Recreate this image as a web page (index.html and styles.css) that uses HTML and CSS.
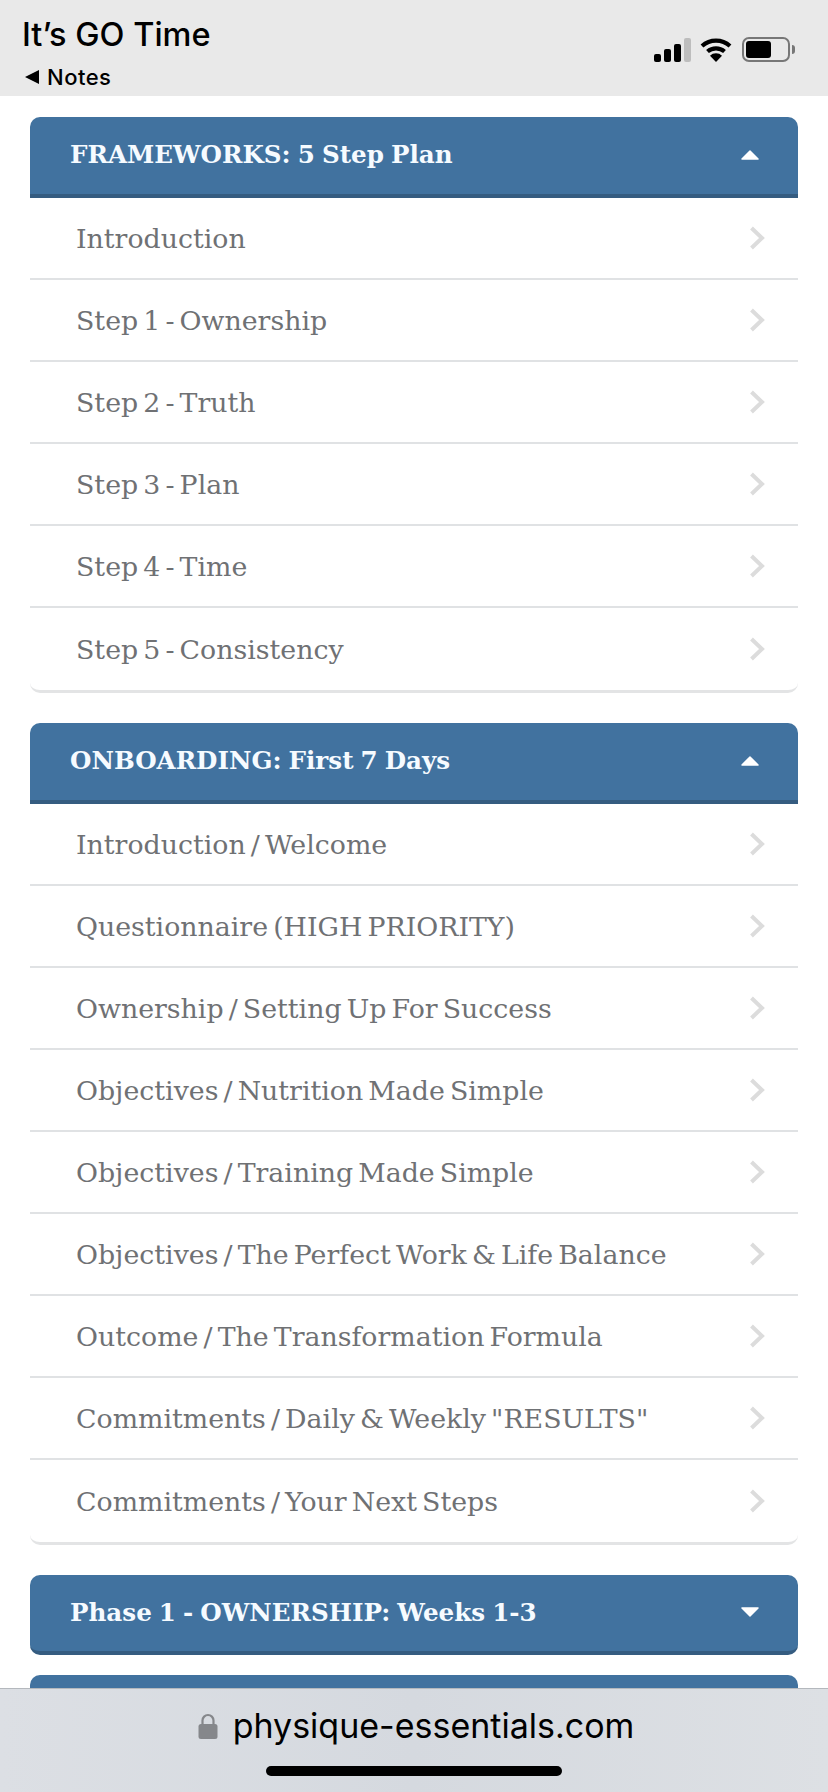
FILE: index.html

```html
<!DOCTYPE html>
<html lang="en">
<head>
<meta charset="UTF-8">
<meta name="viewport" content="width=device-width, initial-scale=1.0">
<title>It's GO Time</title>
<link rel="stylesheet" href="styles.css">
</head>
<body>
<svg class="defs" width="0" height="0">
<symbol id="chev" viewBox="0 0 16 24"><path d="M2.5 2 L13 12 L2.5 22" fill="none" stroke="currentColor" stroke-width="4"/></symbol>
<symbol id="caret" viewBox="0 0 18 10"><path d="M9 1 L17 9 L1 9 Z" fill="currentColor" stroke="currentColor" stroke-width="1.5" stroke-linejoin="round"/></symbol>
</svg>
<div class="statusbar">
<div class="status-left">
<div class="app-title">It’s GO Time</div>
<div class="back"><span class="back-arrow"></span>Notes</div>
</div>
<div class="status-right">
<div class="signal">
<span class="bar b1"></span><span class="bar b2"></span><span class="bar b3"></span><span class="bar b4"></span>
</div>
<svg class="wifi" width="32" height="25" viewBox="0 0 32 25">
<path d="M2 9 A21 21 0 0 1 30 9" fill="none" stroke="#000" stroke-width="4.2"/>
<path d="M7.5 14.5 A13 13 0 0 1 24.5 14.5" fill="none" stroke="#000" stroke-width="4.2"/>
<path d="M16 25 L10 18.8 A8.5 8.5 0 0 1 22 18.8 Z" fill="#000"/>
</svg>
<div class="battery"><div class="battery-fill"></div></div>
<div class="battery-nub"></div>
</div>
</div>

<div class="content">
<div class="panel">
<div class="panel-head open">
<span>FRAMEWORKS: 5 Step Plan</span>
<svg class="caret"><use href="#caret"/></svg>
</div>
<ul class="lessons">
<li>Introduction<svg class="chev"><use href="#chev"/></svg></li>
<li>Step 1 - Ownership<svg class="chev"><use href="#chev"/></svg></li>
<li>Step 2 - Truth<svg class="chev"><use href="#chev"/></svg></li>
<li>Step 3 - Plan<svg class="chev"><use href="#chev"/></svg></li>
<li>Step 4 - Time<svg class="chev"><use href="#chev"/></svg></li>
<li>Step 5 - Consistency<svg class="chev"><use href="#chev"/></svg></li>
</ul>
</div>

<div class="panel">
<div class="panel-head open">
<span>ONBOARDING: First 7 Days</span>
<svg class="caret"><use href="#caret"/></svg>
</div>
<ul class="lessons">
<li>Introduction / Welcome<svg class="chev"><use href="#chev"/></svg></li>
<li>Questionnaire (HIGH PRIORITY)<svg class="chev"><use href="#chev"/></svg></li>
<li>Ownership / Setting Up For Success<svg class="chev"><use href="#chev"/></svg></li>
<li>Objectives / Nutrition Made Simple<svg class="chev"><use href="#chev"/></svg></li>
<li>Objectives / Training Made Simple<svg class="chev"><use href="#chev"/></svg></li>
<li>Objectives / The Perfect Work &amp; Life Balance<svg class="chev"><use href="#chev"/></svg></li>
<li>Outcome / The Transformation Formula<svg class="chev"><use href="#chev"/></svg></li>
<li>Commitments / Daily &amp; Weekly "RESULTS"<svg class="chev"><use href="#chev"/></svg></li>
<li>Commitments / Your Next Steps<svg class="chev"><use href="#chev"/></svg></li>
</ul>
</div>

<div class="panel closed">
<div class="panel-head">
<span>Phase 1 - OWNERSHIP: Weeks 1-3</span>
<svg class="caret down"><use href="#caret"/></svg>
</div>
</div>

<div class="panel closed">
<div class="panel-head"></div>
</div>
</div>

<div class="urlbar">
<div class="url">
<svg class="lock" width="20" height="26" viewBox="0 0 20 26">
<path d="M4.5 12 V7.5 A5.5 5.5 0 0 1 15.5 7.5 V12" fill="none" stroke="#85878b" stroke-width="2.2"/>
<rect x="0.5" y="11" width="19" height="15" rx="2.5" fill="#85878b"/>
</svg>
<span>physique-essentials.com</span>
</div>
<div class="homebar"></div>
</div>
</body>
</html>
```

FILE: styles.css

```css
* {
    box-sizing: border-box;
}
html, body {
    margin: 0;
    padding: 0;
}
body {
    width: 828px;
    height: 1792px;
    overflow: hidden;
    display: flex;
    flex-direction: column;
    background-color: #fff;
    font-family: Inter, 'Liberation Sans', sans-serif;
}
.defs {
    position: absolute;
}

/* status bar */
.statusbar {
    height: 96px;
    flex: none;
    background-color: #e9e9e9;
    display: flex;
    justify-content: space-between;
    padding: 0 33px 0 22px;
    color: #000;
}
.app-title {
    font-size: 32.5px;
    font-weight: 500;
    line-height: 36px;
    margin-top: 17px;
}
.back {
    display: flex;
    align-items: center;
    font-size: 22px;
    font-weight: 500;
    line-height: 26px;
    margin-top: 11px;
    margin-left: 3px;
    letter-spacing: 0.5px;
}
.back-arrow {
    width: 0;
    height: 0;
    border-top: 7px solid transparent;
    border-bottom: 7px solid transparent;
    border-right: 14px solid #000;
    margin-right: 8px;
}
.status-right {
    display: flex;
    align-items: flex-start;
    padding-top: 37px;
}
.signal {
    display: flex;
    align-items: flex-end;
    gap: 3px;
    height: 25px;
    margin-right: 9px;
}
.bar {
    width: 7px;
    background-color: #000;
    border-radius: 2px;
}
.b1 { height: 8px; }
.b2 { height: 13px; }
.b3 { height: 18px; }
.b4 { height: 24px; background-color: #bdbdbd; }
.wifi {
    margin-right: 10px;
}
.battery {
    width: 48px;
    height: 25px;
    border: 2px solid #777;
    border-radius: 7px;
    padding: 2px;
}
.battery-fill {
    width: 25px;
    height: 100%;
    background-color: #000;
    border-radius: 3px;
}
.battery-nub {
    width: 3px;
    height: 9px;
    margin: 8px 0 0 2px;
    background-color: #777;
    border-radius: 0 3px 3px 0;
}

/* accordion */
.content {
    flex: 1;
    min-height: 0;
    overflow: hidden;
    padding: 21px 30px 0;
}
.panel {
    margin-bottom: 30px;
    border-bottom: 3px solid #e3e4e5;
    border-radius: 0 0 10px 10px;
}
.panel.closed {
    margin-bottom: 20px;
    border-bottom: none;
}
.panel-head {
    height: 80px;
    background-color: #41729f;
    border-bottom: 4px solid #355c80;
    border-radius: 10px;
    color: #f6fbff;
    font-family: 'DejaVu Serif', serif;
    font-size: 24.6px;
    font-weight: bold;
    word-spacing: -1.5px;
    display: flex;
    align-items: center;
    justify-content: space-between;
    padding: 0 39px 2px 40px;
}
.panel-head.open {
    height: 81px;
    border-radius: 10px 10px 0 0;
}
.caret {
    width: 18px;
    height: 10px;
    color: #fff;
}
.caret.down {
    transform: rotate(180deg);
}
.lessons {
    list-style: none;
    margin: 0;
    padding: 0;
}
.lessons li {
    height: 82px;
    display: flex;
    align-items: center;
    justify-content: space-between;
    padding: 0 33px 0 46px;
    border-bottom: 2px solid #e0e2e4;
    color: #6f7174;
    font-family: 'DejaVu Serif', serif;
    font-size: 26.8px;
    word-spacing: -3.4px;
}
.lessons li:last-child {
    border-bottom: none;
}
.chev {
    width: 16px;
    height: 24px;
    color: #dcdcdc;
}

/* address bar */
.urlbar {
    height: 104px;
    flex: none;
    border-top: 1px solid #b4b8bd;
    background: linear-gradient(90deg, #dcdfe4, #d5d9df 50%, #dde0e4);
    position: relative;
}
.url {
    display: flex;
    justify-content: center;
    align-items: center;
    gap: 15px;
    height: 66px;
    padding: 7px 0 0 4px;
    font-size: 34px;
    color: #000;
}
.homebar {
    position: absolute;
    left: 266px;
    top: 77px;
    width: 296px;
    height: 10px;
    border-radius: 5px;
    background-color: #000;
}
```
